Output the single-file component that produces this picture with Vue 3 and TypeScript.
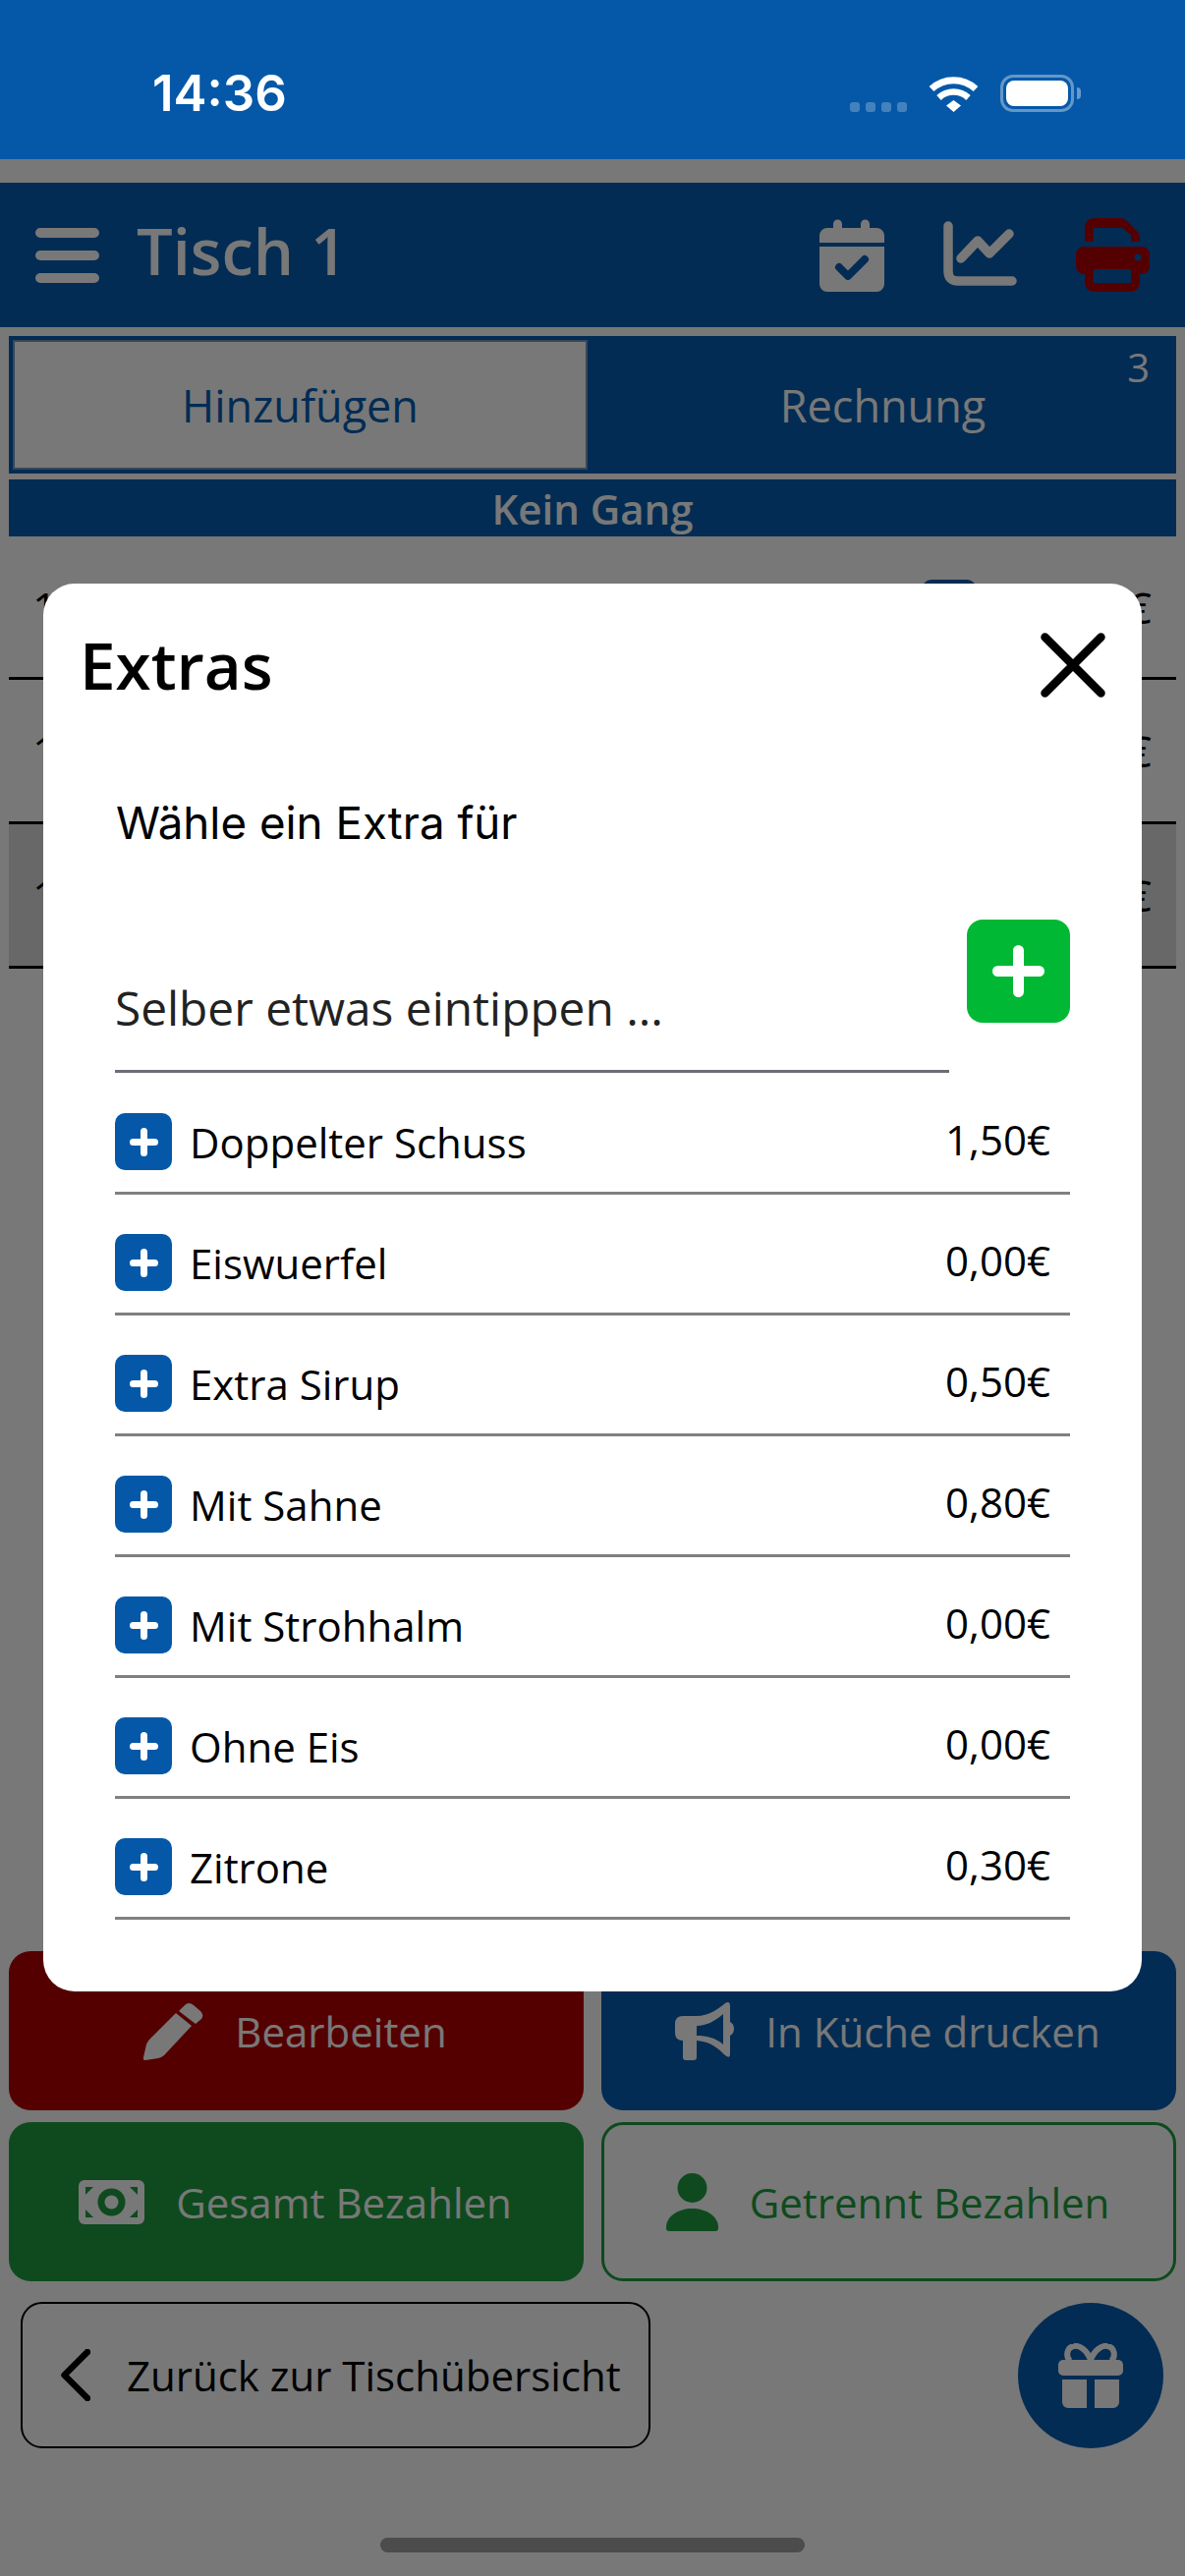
<script setup lang="ts">
interface Extra {
  name: string
  price: string
}

const extras: Extra[] = [
  { name: 'Doppelter Schuss', price: '1,50€' },
  { name: 'Eiswuerfel', price: '0,00€' },
  { name: 'Extra Sirup', price: '0,50€' },
  { name: 'Mit Sahne', price: '0,80€' },
  { name: 'Mit Strohhalm', price: '0,00€' },
  { name: 'Ohne Eis', price: '0,00€' },
  { name: 'Zitrone', price: '0,30€' },
]

const rows = [{ id: 1, badge: true, dark: false }, { id: 2, badge: false, dark: false }, { id: 3, badge: false, dark: true }]
</script>

<template>
  <div class="screen">
    <div class="status">
      <span class="time">14:36</span>
      <div class="status-right">
        <div class="signal"><i></i><i></i><i></i><i></i></div>
        <svg class="wifi" width="51" height="37" viewBox="0 0 51 37" fill="none" stroke="#fff">
          <path d="M3 13.5A33 33 0 0 1 48 13.5" stroke-width="7" />
          <path d="M10.5 22.5A22 22 0 0 1 40.5 22.5" stroke-width="6.5" />
          <path d="M18 30.5L25.5 25L33 30.5L25.5 37Z" fill="#fff" stroke="none" />
        </svg>
        <div class="battery"><div class="battery-fill"></div></div>
        <div class="nub"></div>
      </div>
    </div>

    <header class="topbar">
      <svg class="burger" width="65" height="56" viewBox="0 0 65 56" fill="none" stroke="#f0f0f0" stroke-width="10" stroke-linecap="round">
        <path d="M5 5H60M5 28H60M5 51H60" />
      </svg>
      <h1 class="table-name">Tisch 1</h1>
      <div class="top-icons">
        <svg width="66" height="74" viewBox="0 0 66 74">
          <path fill="#f0f0f0" d="M14 9V5a4.500 4.500 0 0 1 9 0V9H42V5a4.500 4.500 0 0 1 9 0V9H58a8 8 0 0 1 8 8V24H0V17a8 8 0 0 1 8-8Z" />
          <path fill="#f0f0f0" d="M0 28H66V66a8 8 0 0 1-8 8H8a8 8 0 0 1-8-8Z" />
          <path fill="none" stroke="#0558a8" stroke-width="8" stroke-linecap="round" stroke-linejoin="round" d="M20 49L29 58L46 41" />
        </svg>
        <svg class="chart" width="75" height="66" viewBox="0 0 75 66" fill="none" stroke="#f0f0f0" stroke-width="9.500" stroke-linecap="round" stroke-linejoin="round">
          <path d="M5 5V51Q5 61 15 61H70" />
          <path d="M18 38L35 20L47 33L67 13" />
        </svg>
        <svg width="75" height="75" viewBox="0 0 75 75">
          <path fill="#aa0000" fill-rule="evenodd" d="M9 24V9a9 9 0 0 1 9-9H45a9 9 0 0 1 7 3L62 13a9 9 0 0 1 3 7V24H56V17L47 10H18V24Z" />
          <path fill="#aa0000" fill-rule="evenodd" d="M8 29H67a8 8 0 0 1 8 8V49a8 8 0 0 1-8 8H65V66a9 9 0 0 1-9 9H18a9 9 0 0 1-9-9V57H8a8 8 0 0 1-8-8V37a8 8 0 0 1 8-8ZM18 52V66H56V52Z" />
          <circle cx="63" cy="40" r="3.500" fill="#0558a8" />
        </svg>
      </div>
    </header>

    <div class="tabs">
      <div class="tab active">Hinzufügen</div>
      <div class="tab">Rechnung<span class="tab-count">3</span></div>
    </div>

    <div class="course">Kein Gang</div>

    <div class="order">
      <div v-for="row in rows" :key="row.id" class="order-row" :class="{ dark: row.dark }">
        <span>1</span>
        <div class="order-right">
          <div v-if="row.badge" class="order-badge"></div>
          <span>€</span>
        </div>
      </div>
    </div>

    <div class="actions">
      <button class="action red">
        <svg width="61" height="59" viewBox="0 0 61 59" fill="#f0f0f0">
          <path d="M33 11L49 24L21 54Q19 56 15 57L2 59Q-1 59 0 56L3 43Q4 40 6 38Z" />
          <path d="M36 9L42 3Q46 -1 51 3L58 9Q62 13 59 17L53 22Z" />
        </svg>
        Bearbeiten
      </button>
      <button class="action blue">
        <svg width="60" height="60" viewBox="0 0 60 60" fill="#f0f0f0">
          <path fill-rule="evenodd" d="M8 15H22C34 15 44 8 51 2Q56 -1 56 5V21Q60 23 60 28Q60 33 56 35V54Q56 59 51 55C44 48 36 41 22 40V57Q22 60 19 60H11Q8 60 8 57V40Q0 40 0 32V23Q0 15 8 15ZM22 25C32 25 41 20 49 13V44C41 37 32 35 22 35Z" />
        </svg>
        In Küche drucken
      </button>
      <button class="action green">
        <svg width="67" height="45" viewBox="0 0 67 45">
          <rect width="67" height="45" rx="6" fill="#f0f0f0" />
          <circle cx="33.500" cy="22.500" r="14" fill="#1c943c" />
          <circle cx="33.500" cy="22.500" r="7" fill="#f0f0f0" />
          <path fill="#1c943c" d="M7 7H15L7 15ZM60 7V15L52 7ZM7 38V30L15 38ZM60 38H52L60 30Z" />
        </svg>
        Gesamt Bezahlen
      </button>
      <button class="action outline">
        <svg width="53" height="59" viewBox="0 0 53 59" fill="#1c943c">
          <circle cx="26.500" cy="15" r="15" />
          <path d="M0 56V55C0 44 12 36 26.500 36C41 36 53 44 53 55V56Q53 59 50 59H3Q0 59 0 56Z" />
        </svg>
        Getrennt Bezahlen
      </button>
    </div>

    <div class="footer">
      <button class="back">
        <svg width="30" height="53" viewBox="0 0 30 53" fill="none" stroke="#000" stroke-width="6.500" stroke-linecap="round" stroke-linejoin="round">
          <path d="M27 3L3.500 26.500L27 50" />
        </svg>
        Zurück zur Tischübersicht
      </button>
      <button class="gift">
        <svg width="66" height="66" viewBox="0 0 66 66">
          <path fill="none" stroke="#f0f0f0" stroke-width="6" d="M33 17C29 7 22 2 16 3C9 4 7 13 12 18M33 17C37 7 44 2 50 3C57 4 59 13 54 18" />
          <rect y="17" width="66" height="16" rx="5" fill="#f0f0f0" />
          <path fill="#f0f0f0" d="M4 37H29V66H10a6 6 0 0 1-6-6ZM37 37H62V60a6 6 0 0 1-6 6H37Z" />
        </svg>
      </button>
    </div>

    <div class="home-bar"></div>

    <div class="overlay">
      <div class="modal">
        <div class="modal-head">
          <h2 class="modal-title">Extras</h2>
          <svg width="66" height="66" viewBox="0 0 66 66" fill="none" stroke="#000" stroke-width="8.500" stroke-linecap="round">
            <path d="M4.500 4.500L61.500 61.500M61.500 4.500L4.500 61.500" />
          </svg>
        </div>
        <p class="prompt">Wähle ein Extra für</p>
        <div class="custom">
          <div class="custom-input">Selber etwas eintippen ...</div>
          <button class="custom-add">
            <svg width="53" height="53" viewBox="0 0 53 53" fill="none" stroke="#fff" stroke-width="11" stroke-linecap="round">
              <path d="M26.500 5.500V47.500M5.500 26.500H47.500" />
            </svg>
          </button>
        </div>
        <ul class="extra-list">
          <li v-for="extra in extras" :key="extra.name" class="extra">
            <span class="extra-plus">
              <svg width="29" height="29" viewBox="0 0 29 29" fill="none" stroke="#fff" stroke-width="7" stroke-linecap="round">
                <path d="M14.500 3.500V25.500M3.500 14.500H25.500" />
              </svg>
            </span>
            <span class="extra-name">{{ extra.name }}</span>
            <span class="extra-price">{{ extra.price }}</span>
          </li>
        </ul>
      </div>
    </div>
  </div>
</template>

<style scoped>
.screen {
  position: relative;
  width: 1206px;
  height: 2622px;
  overflow: hidden;
  display: flex;
  flex-direction: column;
  background: #f0f0f0;
  font-family: "Open Sans", "Noto Sans", sans-serif;
  color: #000;
}

button {
  font: inherit;
  border: none;
  padding: 0;
}

.status {
  position: relative;
  z-index: 2;
  height: 162px;
  flex: none;
  background: #0558a8;
  color: #fff;
  margin-bottom: 24px;
}
.time {
  position: absolute;
  left: 155px;
  top: 66px;
  font-family: Inter, sans-serif;
  font-weight: 600;
  font-size: 51px;
  line-height: 58px;
}
.status-right {
  position: absolute;
  left: 865px;
  top: 76px;
  display: flex;
  align-items: flex-start;
}
.signal {
  display: flex;
  gap: 6px;
  margin-top: 28px;
}
.signal i {
  width: 10px;
  height: 10px;
  border-radius: 3px;
  background: rgba(255, 255, 255, 0.25);
}
.wifi {
  margin-left: 22px;
  margin-top: 1px;
}
.battery {
  margin-left: 22px;
  width: 75px;
  height: 38px;
  box-sizing: border-box;
  border: 3px solid rgba(255, 255, 255, 0.38);
  border-radius: 13px;
  padding: 3px;
}
.battery-fill {
  height: 100%;
  background: #fff;
  border-radius: 8px;
}
.nub {
  width: 4px;
  height: 12px;
  margin: 13px 0 0 3px;
  background: rgba(255, 255, 255, 0.4);
  border-radius: 0 6px 6px 0;
}

.topbar {
  height: 147px;
  flex: none;
  display: flex;
  align-items: center;
  background: #0558a8;
  color: #f0f0f0;
  padding: 0 36px;
  box-sizing: border-box;
}
.table-name {
  margin: 0 0 8px 38px;
  font-size: 65px;
  font-weight: 600;
  line-height: 1;
}
.top-icons {
  margin-left: auto;
  display: flex;
  align-items: center;
  gap: 60px;
}
.top-icons svg {
  display: block;
}
.chart {
  margin-top: -4px;
}

.tabs {
  margin: 9px 9px 0;
  height: 140px;
  flex: none;
  box-sizing: border-box;
  padding: 4px;
  display: grid;
  grid-template-columns: 585px 1fr;
  background: #0558a8;
  font-size: 45px;
}
.tab {
  position: relative;
  display: flex;
  align-items: center;
  justify-content: center;
  color: #f0f0f0;
}
.tab:not(.active) {
  padding-left: 6px;
}
.tab.active {
  box-sizing: border-box;
  background: #f0f0f0;
  color: #0558a8;
  border: 2px solid #6f8fb0;
}
.tab-count {
  position: absolute;
  right: 23px;
  top: 0;
  font-size: 40px;
  line-height: 56px;
}

.course {
  margin: 6px 9px 0;
  height: 58px;
  flex: none;
  display: flex;
  align-items: center;
  justify-content: center;
  background: #0558a8;
  color: #f0f0f0;
  font-size: 42px;
  font-weight: 600;
}

.order {
  flex: 1;
  margin: 0 9px;
  font-size: 44px;
}
.order-row {
  height: 147px;
  box-sizing: border-box;
  display: flex;
  align-items: center;
  justify-content: space-between;
  padding: 0 25px 0 24px;
  border-bottom: 3px solid #000;
}
.order-row:first-child {
  height: 146px;
}
.order-row.dark {
  background: #d0d0d0;
}
.order-right {
  display: flex;
  align-items: center;
  gap: 153px;
}
.order-badge {
  width: 56px;
  height: 56px;
  border-radius: 10px;
  background: #0558a8;
}

.actions {
  flex: none;
  margin: 0 9px;
  display: grid;
  grid-template-columns: 1fr 1fr;
  grid-auto-rows: 162px;
  column-gap: 18px;
  row-gap: 12px;
}
.action {
  display: flex;
  align-items: center;
  justify-content: center;
  gap: 32px;
  padding-right: 2px;
  border-radius: 22px;
  font-size: 42px;
  color: #f0f0f0;
  box-sizing: border-box;
}
.action svg {
  flex: none;
}
.red {
  background: #aa0000;
}
.blue {
  background: #0558a8;
}
.green {
  background: #1c943c;
}
.outline {
  background: transparent;
  border: 3px solid #1c943c;
  color: #1c943c;
}

.footer {
  flex: none;
  margin: 21px 22px 0 21px;
  height: 149px;
  display: flex;
  justify-content: space-between;
  align-items: center;
}
.back {
  width: 641px;
  height: 149px;
  box-sizing: border-box;
  border: 2px solid #000;
  border-radius: 22px;
  background: transparent;
  display: flex;
  align-items: center;
  padding-left: 39px;
  gap: 37px;
  font-size: 42px;
  color: #000;
}
.gift {
  width: 148px;
  height: 148px;
  border-radius: 50%;
  background: #0558a8;
  display: flex;
  align-items: center;
  justify-content: center;
}

.home-bar {
  flex: none;
  align-self: center;
  width: 432px;
  height: 15px;
  margin: 91px 0 24px;
  border-radius: 8px;
  background: #989898;
}

.overlay {
  position: absolute;
  z-index: 1;
  left: 0;
  right: 0;
  top: 162px;
  bottom: 0;
  box-sizing: border-box;
  padding: 432px 44px 0;
  background: rgba(0, 0, 0, 0.5);
}
.modal {
  background: #fff;
  border-radius: 32px;
  padding: 50px 73px 73px;
  box-sizing: border-box;
  height: 1433px;
}
.modal-head {
  display: flex;
  align-items: center;
  justify-content: space-between;
  margin: 0 -36px 0 -36px;
  height: 66px;
}
.modal-title {
  margin: 0;
  font-size: 65.500px;
  font-weight: 600;
  line-height: 1;
}
.prompt {
  margin: 100px 0 0 1px;
  font-family: Inter, sans-serif;
  font-size: 45.700px;
  line-height: 56px;
}
.custom {
  margin-top: 70px;
  display: flex;
  gap: 18px;
  align-items: flex-start;
}
.custom-input {
  flex: 1;
  height: 156px;
  box-sizing: border-box;
  border-bottom: 3px solid #6d6d78;
  display: flex;
  align-items: flex-end;
  padding-bottom: 33px;
  font-size: 47.800px;
  line-height: 60px;
  color: #222;
}
.custom-add {
  flex: none;
  width: 105px;
  height: 105px;
  border-radius: 16px;
  background: #00b833;
  display: flex;
  align-items: center;
  justify-content: center;
}
.extra-list {
  list-style: none;
  margin: 1px 0 0;
  padding: 0;
}
.extra {
  height: 123px;
  box-sizing: border-box;
  display: flex;
  align-items: center;
  padding: 40px 20px 22px 0;
  border-bottom: 3px solid #808080;
  font-size: 42px;
}
.extra-plus {
  flex: none;
  width: 58px;
  height: 58px;
  border-radius: 10px;
  background: #0558a8;
  display: flex;
  align-items: center;
  justify-content: center;
  margin-right: 18px;
}
.extra-name {
  flex: 1;
}
.extra-price {
  margin-top: -6px;
}
</style>
